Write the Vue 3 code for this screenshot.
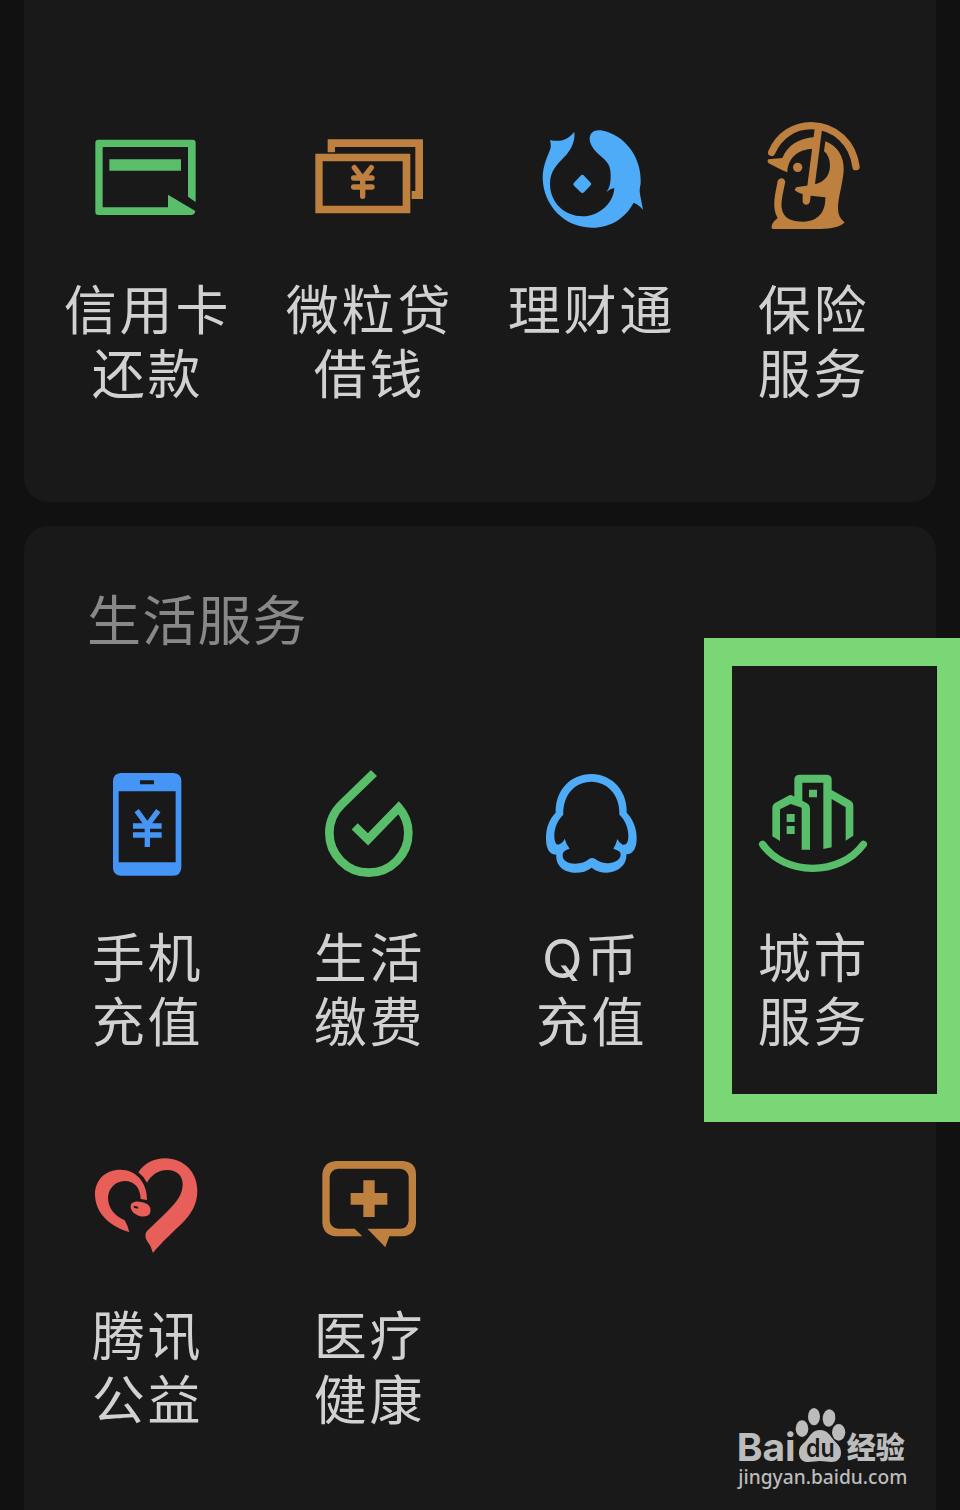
<template>
  <div class="wallet-page">
    <section class="card card-finance">
      <div class="service-grid">
        <div v-for="item in financeServices" :key="item.id" class="service">
          <svg class="service-icon" :class="item.color" :viewBox="item.viewBox">
            <path
              v-for="(shape, i) in item.shapes"
              :key="i"
              :d="shape.d"
              :class="shape.w ? 'line' : 'solid'"
              :stroke-width="shape.w"
              :stroke-linecap="shape.cap"
              fill-rule="evenodd"
            />
          </svg>
          <div class="service-label">
            <span v-for="line in item.lines" :key="line">{{ line }}</span>
          </div>
        </div>
      </div>
    </section>

    <section class="card card-life">
      <h2 class="card-title">生活服务</h2>
      <div class="service-grid">
        <div v-for="item in lifeServices" :key="item.id" class="service">
          <svg class="service-icon" :class="item.color" :viewBox="item.viewBox">
            <path
              v-for="(shape, i) in item.shapes"
              :key="i"
              :d="shape.d"
              :class="shape.w ? 'line' : 'solid'"
              :stroke-width="shape.w"
              :stroke-linecap="shape.cap"
              fill-rule="evenodd"
            />
          </svg>
          <div class="service-label">
            <span v-for="line in item.lines" :key="line">{{ line }}</span>
          </div>
        </div>
      </div>
    </section>

    <div class="highlight"></div>

    <svg class="watermark" viewBox="0 0 600 330">
      <text class="brand" x="35" y="197" textLength="177" lengthAdjust="spacingAndGlyphs">Bai</text>
      <ellipse cx="231" cy="101" rx="19" ry="25" />
      <ellipse cx="267" cy="65" rx="18" ry="26" />
      <ellipse cx="312" cy="69" rx="19" ry="26" transform="rotate(8 312 69)" />
      <ellipse cx="341" cy="112" rx="20" ry="25" />
      <path d="M285 105C308 105 315 122 328 137C341 150 348 157 348 174C348 191 336 201 320 201C307 201 297 198 285 198C273 198 262 201 250 201C232 201 222 190 222 173C222 155 231 149 243 137C256 122 262 105 285 105Z" />
      <text class="du" x="243" y="187" textLength="86" lengthAdjust="spacingAndGlyphs">du</text>
      <text class="brand-cn" x="365" y="189" textLength="174" lengthAdjust="spacingAndGlyphs">经验</text>
      <text class="url" x="40" y="266" textLength="507" lengthAdjust="spacingAndGlyphs">jingyan.baidu.com</text>
    </svg>
  </div>
</template>

<script setup>
// shapes with a "w" are stroked, the others are filled
const financeServices = [
  {
    id: 'credit-card',
    lines: ['信用卡', '还款'],
    color: 'green',
    viewBox: '3 -30 390 390',
    shapes: [
      { d: 'M55 59H338Q347 59 347 68V246L324 230V81H68V262H264V224L346 273Q345 284 335 285H55Q46 285 46 276V68Q46 59 55 59Z' },
      { d: 'M88 118H303V152H88Z' }
    ]
  },
  {
    id: 'micro-loan',
    lines: ['微粒贷', '借钱'],
    color: 'orange',
    viewBox: '9 -30 390 390',
    shapes: [
      { d: 'M46 101H331V280H46ZM68 124V257H308V124Z' },
      { d: 'M83 58H369V237H335V213H346V81H105V97H83Z' },
      { d: 'M163 143L188 176L214 143M188 176V229M161 174H216M161 201H216', w: 16, cap: 'round' }
    ]
  },
  {
    id: 'licaitong',
    lines: ['理财通'],
    color: 'sky',
    viewBox: '-15 -15 390 390',
    shapes: [
      { d: 'M60 75C88 82 114 75 133 50C136 78 125 103 102 127C79 151 60 169 60 208C61 263 103 304 158 304C208 303 251 265 253 219Q241 221 229 231C240 218 242 203 242 181C242 143 226 137 205 117C184 97 172 73 183 56C192 42 214 44 231 50C293 70 336 135 332 205C330 220 328 222 330 238L339 284Q324 267 311 263C285 311 239 339 185 338C104 338 40 272 38 190C38 147 56 119 62 98Q63 85 60 75Z' },
      { d: 'M157 179Q160 179 163 183L182 203Q186 207 182 211L162 232Q157 237 152 232L132 212Q127 207 132 203L151 183Q154 179 157 179Z' }
    ]
  },
  {
    id: 'insurance',
    lines: ['保险', '服务'],
    color: 'orange',
    viewBox: '-24 0 390 390',
    shapes: [
      { d: 'M50 127C72 76 117 47 169 47C242 48 294 101 303 170', w: 22, cap: 'round' },
      { d: 'M40 148L82 144C99 104 132 85 179 81L175 116C129 118 99 142 97 187L82 181L41 160Q35 153 40 148Z' },
      { d: 'M190 58L166 244', w: 22 },
      { d: 'M211 94C247 108 268 139 266 181C264 219 250 259 249 292C249 315 256 327 269 337C256 351 229 357 196 357H53Q46 355 53 340Q58 332 68 324C49 292 61 252 68 213C74 200 90 204 91 216C84 247 78 273 80 293C84 324 108 335 146 335C190 334 212 306 211 262L167 257L165 274C162 289 143 287 143 274V252Q126 248 120 241Q118 231 134 230L174 224C214 216 229 189 224 155C221 137 214 130 207 124Z' },
      { d: 'M114 172A14 14 0 1 0 142 172A14 14 0 1 0 114 172Z' }
    ]
  }
]

const lifeServices = [
  {
    id: 'phone-topup',
    lines: ['手机', '充值'],
    color: 'blue',
    viewBox: '-27 -6 390 390',
    shapes: [
      { d: 'M92 39H250Q274 41 274 63V323Q272 346 250 347H92Q69 345 69 323V63Q70 41 92 39ZM150 61V73H192V61ZM86 94V307H257V94Z' },
      { d: 'M140 152L172 196L205 152M172 193V261M129 198H215M129 225H215', w: 16 }
    ]
  },
  {
    id: 'utilities',
    lines: ['生活', '缴费'],
    color: 'green',
    viewBox: '-21 -6 390 390',
    shapes: [
      { d: 'M192 39L96 132C69 158 58 185 58 219C58 284 111 338 176 338C242 338 295 284 295 219C295 192 286 166 266 143L174 238L134 199', w: 26 }
    ]
  },
  {
    id: 'q-coin',
    lines: ['Q币', '充值'],
    color: 'sky',
    viewBox: '-15 -6 390 390',
    shapes: [
      { d: 'M184 42C246 42 293 94 290 158C309 177 321 206 320 237C320 264 308 284 289 283C292 316 261 338 230 338C212 338 197 333 185 323C171 334 155 338 137 338C105 338 76 319 79 284C58 285 48 264 48 237C47 204 58 177 77 158C75 91 122 42 184 42ZM184 65C134 65 98 106 100 164C84 179 72 203 73 230C74 250 81 256 88 253C96 249 101 244 104 236Q108 252 119 266Q105 269 99 279C93 298 110 311 136 311C153 311 167 306 177 297Q187 291 197 298C207 306 222 312 240 309C264 305 277 293 270 276Q263 270 250 266Q259 252 262 237Q267 249 278 254C289 256 294 249 295 232C296 204 285 179 268 164C271 106 232 65 184 65Z' }
    ]
  },
  {
    id: 'city',
    lines: ['城市', '服务'],
    color: 'green',
    viewBox: '-9 -6 390 390',
    shapes: [
      { d: 'M67 229V143Q67 134 75 129L115 107Q122 103 130 108L171 130Q180 135 180 144V269H155V143L122 132L90 148V243Z' },
      { d: 'M133 112V58Q134 45 147 44H232Q245 46 245 58V90L302 122Q310 127 310 137V227L287 242V142L245 117V262L220 267V68H157V128Z' },
      { d: 'M177 89H201V112H177ZM110 162H134V186H110ZM110 198H134V222H110Z' },
      { d: 'M38 253C103 348 270 350 340 253', w: 22, cap: 'round' }
    ]
  },
  {
    id: 'charity',
    lines: ['腾讯', '公益'],
    color: 'red',
    viewBox: '3 -27 390 390',
    shapes: [
      { d: 'M148 261C91 246 45 205 45 148C45 104 77 74 121 74C168 74 202 112 201 165L182 162C181 128 163 108 134 108C105 109 84 131 84 160C85 191 105 214 134 226Q144 243 148 261Z' },
      { d: 'M175 82C193 54 223 40 255 40C312 40 352 82 352 137C352 180 332 210 301 240C265 274 239 299 219 324Q214 303 200 286Q192 269 201 258L258 203C292 170 308 148 308 117C308 91 289 75 263 75C235 75 215 89 201 113Q190 93 175 82Z' },
      { d: 'M156 174C165 167 181 168 196 175C211 181 214 192 210 205C204 217 185 217 171 210C153 202 147 183 156 174ZM160 184Q162 193 176 190Q173 181 160 184Z' }
    ]
  },
  {
    id: 'medical',
    lines: ['医疗', '健康'],
    color: 'orange',
    viewBox: '-21 -27 390 390',
    shapes: [
      { d: 'M78 48H278Q318 51 318 88V234Q315 271 278 274H238L226 307L172 251H270Q293 251 296 227V96Q293 73 270 71H85Q62 73 59 96V227Q62 249 85 251H134L157 274H78Q40 271 37 234V88Q40 51 78 48Z' },
      { d: 'M160 106H194V144H232V179H194V216H160V179H122V144H160Z' }
    ]
  }
]
</script>

<style scoped>
.wallet-page {
  position: relative;
  width: 960px;
  height: 1510px;
  padding: 0 24px;
  box-sizing: border-box;
  overflow: hidden;
  display: flex;
  flex-direction: column;
  gap: 24px;
  background: #111111;
  font-family: "Inter", "Noto Sans CJK SC", sans-serif;
}

.card {
  background: #191919;
  box-sizing: border-box;
  flex-shrink: 0;
}

.card-finance {
  height: 502px;
  padding: 110px 13px 0 11px;
  border-radius: 0 0 24px 24px;
}

.card-life {
  height: 1008px;
  padding: 64px 13px 0 11px;
  border-radius: 24px 24px 0 0;
}

.card-title {
  margin: 0 0 104px 52px;
  color: #888888;
  font-size: 54px;
  font-weight: 400;
  letter-spacing: 1.2px;
  line-height: 64px;
}

.service-grid {
  display: grid;
  grid-template-columns: repeat(4, 1fr);
  row-gap: 83px;
}

.service {
  display: flex;
  flex-direction: column;
  align-items: center;
}

.service-icon {
  width: 130px;
  height: 130px;
}

.service-label {
  display: flex;
  flex-direction: column;
  align-items: center;
  height: 126px;
  margin-top: 39px;
  padding-left: 3px;
  color: #d1d1d1;
  font-size: 53px;
  letter-spacing: 2.8px;
  line-height: 64px;
  white-space: nowrap;
}

.solid {
  fill: currentColor;
}

.line {
  fill: none;
  stroke: currentColor;
}

.green {
  color: #58be6a;
}

.orange {
  color: #bd803f;
}

.sky {
  color: #4eabf8;
}

.blue {
  color: #4595f7;
}

.red {
  color: #e85e59;
}

.highlight {
  position: absolute;
  top: 638px;
  left: 704px;
  width: 261px;
  height: 484px;
  box-sizing: border-box;
  border: 28px solid #7bd676;
}

.watermark {
  position: absolute;
  left: 725px;
  top: 1395px;
  width: 200px;
  height: 110px;
  fill: #bcbcbc;
}

.brand {
  font: 700 115px "Inter", sans-serif;
}

.du {
  font: 600 77px "Inter", sans-serif;
  fill: #191919;
}

.brand-cn {
  font: 900 88px "Noto Sans CJK SC", sans-serif;
}

.url {
  font: 500 60px "Noto Sans", sans-serif;
}
</style>

<style>
body {
  margin: 0;
  background: #111111;
}
</style>
